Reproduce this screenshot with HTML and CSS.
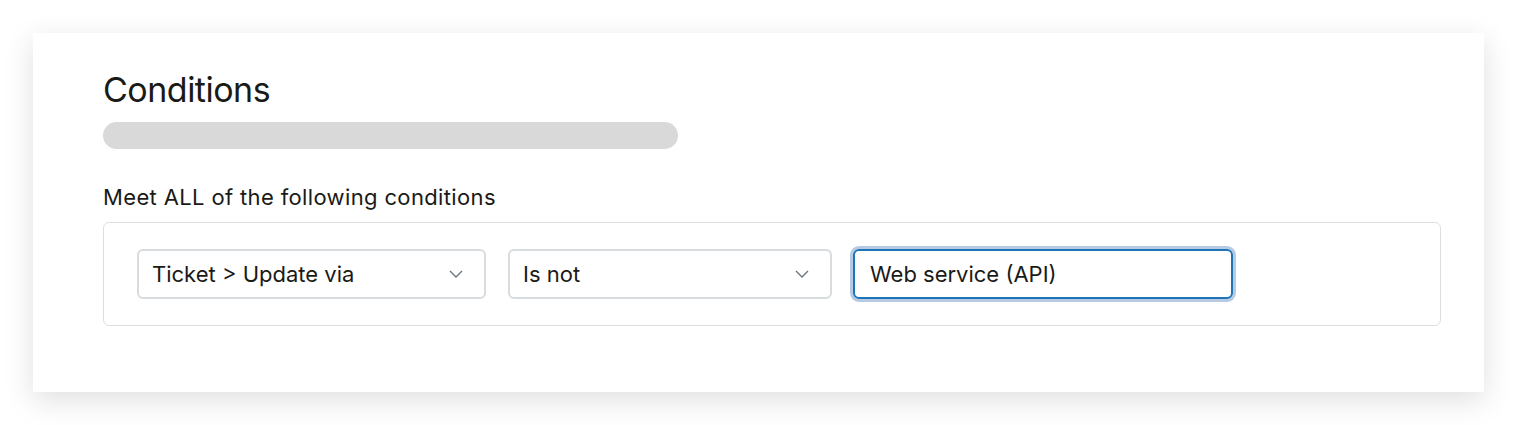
FILE: index.html
```html
<!DOCTYPE html>
<html>
<head>
<meta charset="utf-8">
<link rel="stylesheet" href="styles.css">
</head>
<body>
<div class="card">
  <h1 class="title">Conditions</h1>
  <div class="skeleton"></div>
  <div class="label">Meet ALL of the following conditions</div>
  <div class="box">
    <div class="select sel-1">
      <span class="value">Ticket &gt; Update via</span>
      <svg class="chev" width="14" height="8" viewBox="0 0 14 8"><path d="M1 1l6 6 6-6" fill="none" stroke="#68737d" stroke-width="1.3"/></svg>
    </div>
    <div class="select sel-2">
      <span class="value">Is not</span>
      <svg class="chev" width="14" height="8" viewBox="0 0 14 8"><path d="M1 1l6 6 6-6" fill="none" stroke="#68737d" stroke-width="1.3"/></svg>
    </div>
    <div class="input">
      <span class="value">Web service (API)</span>
    </div>
  </div>
</div>
</body>
</html>
```
FILE: styles.css
```css
html, body {
  margin: 0;
  padding: 0;
  background: #ffffff;
}
body {
  padding: 33px 33px 33px 33px;
  min-height: 425px;
  box-sizing: border-box;
  font-family: Inter, "Noto Sans", sans-serif;
  color: #1a1a17;
}
.card {
  width: 1451px;
  height: 359px;
  box-sizing: border-box;
  background: #ffffff;
  box-shadow: 0 8px 28px rgba(0, 0, 0, 0.13);
  padding: 37px 43px 0 70px;
}
.title {
  margin: 0;
  font-weight: 400;
  font-size: 34px;
  line-height: 40px;
  letter-spacing: -0.5px;
}
.skeleton {
  margin-top: 12px;
  width: 575px;
  height: 27px;
  border-radius: 13.5px;
  background: #d9d9d9;
}
.label {
  margin-top: 34px;
  font-size: 22px;
  line-height: 28px;
  letter-spacing: 0.36px;
}
.box {
  margin-top: 11px;
  border: 1px solid #dedede;
  border-radius: 6px;
  height: 104px;
  box-sizing: border-box;
  display: flex;
  align-items: center;
  padding: 0 33px;
}
.select, .input {
  height: 50px;
  box-sizing: border-box;
  border-radius: 6px;
  display: flex;
  align-items: center;
  font-size: 22px;
  flex-shrink: 0;
}
.select {
  border: 2px solid #d8dcde;
  padding: 0 21px 0 13px;
  justify-content: space-between;
}
.sel-1 { width: 349px; }
.sel-2 { width: 324px; margin-left: 22px; }
.input {
  width: 380px;
  margin-left: 21px;
  border: 2px solid #1f73b7;
  box-shadow: 0 0 0 3px #b6cbe3;
  padding: 0 15px;
}
.chev {
  display: block;
}
```
